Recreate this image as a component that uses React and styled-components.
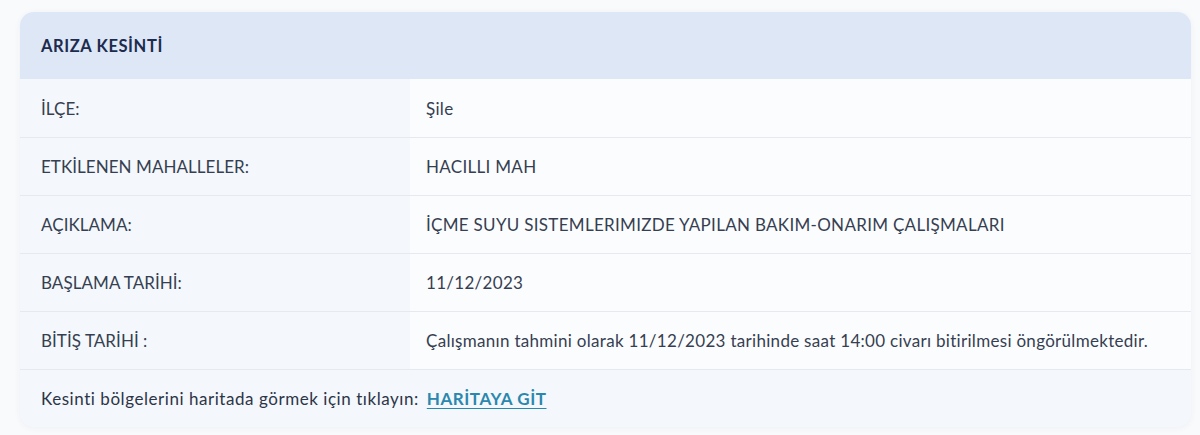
import React from 'react';
import styled, { createGlobalStyle } from 'styled-components';

const GlobalStyle = createGlobalStyle`
  body {
    margin: 0;
    background: #f9fafc;
    font-family: Lato, 'Open Sans', sans-serif;
    letter-spacing: 0.3px;
  }
`;

const Page = styled.div`
  padding: 12px 9px 7px 20px;
`;

const Card = styled.div`
  border-radius: 14px;
  overflow: hidden;
  background: #f4f7fb;
  box-shadow: 0 1px 6px rgba(40, 60, 100, 0.06);
`;

const Header = styled.div`
  height: 67px;
  display: flex;
  align-items: center;
  padding-left: 21px;
  background: #dde7f6;
  color: #1c2b4e;
  font-weight: 700;
  font-size: 16.5px;
  letter-spacing: 0.6px;
`;

const Row = styled.div`
  display: grid;
  grid-template-columns: 390px 1fr;
  height: 58px;
  border-top: ${p => (p.first ? 'none' : '1.5px solid #e6eaf0')};
  box-sizing: border-box;
`;

const Cell = styled.div`
  display: flex;
  align-items: center;
  padding-left: ${p => (p.value ? '16px' : '21px')};
  background: ${p => (p.value ? '#fbfcfe' : '#f4f7fb')};
  color: #363f51;
  font-size: 17px;
  letter-spacing: ${p => (p.value ? '0.3px' : '0.05px')};
`;

const Footer = styled.div`
  height: 58px;
  display: flex;
  align-items: center;
  padding-left: 21px;
  border-top: 1.5px solid #e6eaf0;
  box-sizing: border-box;
  color: #2c3548;
  font-size: 17px;
  letter-spacing: 0.55px;
`;

const MapLink = styled.a`
  margin-left: 8px;
  color: #2b87ad;
  font-weight: 700;
  text-decoration: underline;
  text-underline-offset: 3px;
`;

const rows = [
  ['İLÇE:', 'Şile'],
  ['ETKİLENEN MAHALLELER:', 'HACILLI MAH'],
  ['AÇIKLAMA:', 'İÇME SUYU SISTEMLERIMIZDE YAPILAN BAKIM-ONARIM ÇALIŞMALARI'],
  ['BAŞLAMA TARİHİ:', '11/12/2023'],
  ['BİTİŞ TARİHİ :', 'Çalışmanın tahmini olarak 11/12/2023 tarihinde saat 14:00 civarı bitirilmesi öngörülmektedir.'],
];

export default function App() {
  return (
    <>
      <GlobalStyle />
      <Page>
        <Card>
          <Header>ARIZA KESİNTİ</Header>
          {rows.map(([label, value], i) => (
            <Row key={label} first={i === 0}>
              <Cell>{label}</Cell>
              <Cell value>{value}</Cell>
            </Row>
          ))}
          <Footer>
            Kesinti bölgelerini haritada görmek için tıklayın:
            <MapLink href="#">HARİTAYA GİT</MapLink>
          </Footer>
        </Card>
      </Page>
    </>
  );
}
